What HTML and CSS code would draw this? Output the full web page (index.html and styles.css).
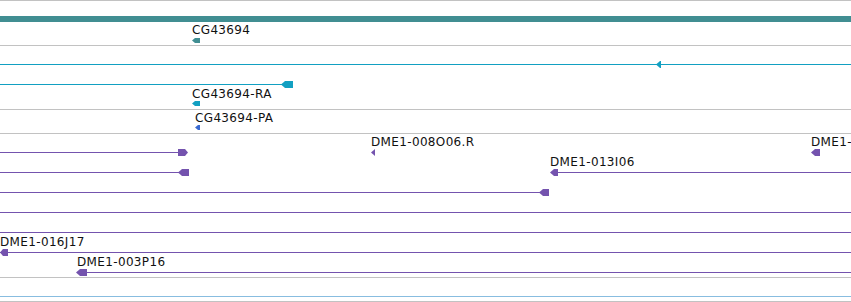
FILE: index.html
```html
<!DOCTYPE html>
<html lang="en">
<head>
    <meta charset="UTF-8">
    <meta name="viewport" content="width=device-width, initial-scale=1.0">
    <title>Tracks</title>
    <link rel="stylesheet" href="styles.css">
</head>
<body>
    <div class="tracks">
        <svg class="canvas" width="851" height="302" viewBox="0 0 851 302">
            <!-- track separators -->
            <rect class="sep" x="0" y="0" width="851" height="1"/>
            <rect class="sep" x="0" y="45" width="851" height="1"/>
            <rect class="sep" x="0" y="109" width="851" height="1"/>
            <rect class="sep" x="0" y="133" width="851" height="1"/>
            <rect class="sep" x="0" y="277" width="851" height="1"/>
            <rect class="sep-blue" x="0" y="296" width="851" height="1"/>
            <rect class="sep" x="0" y="301" width="851" height="1"/>

            <!-- gene track -->
            <rect class="teal" x="0" y="16" width="851" height="6"/>
            <text class="label" x="192" y="34">CG43694</text>
            <polygon class="teal" points="192,40.5 195,38 200,38 200,43 195,43"/>

            <!-- transcripts -->
            <rect class="cyan" x="0" y="64" width="851" height="1"/>
            <polygon class="cyan" points="656,64.5 660,61 661,61 661,68 660,68"/>
            <rect class="cyan" x="0" y="84" width="285" height="1"/>
            <polygon class="cyan" points="281,84.5 285,81 293,81 293,88 285,88"/>
            <text class="label" x="192" y="98">CG43694-RA</text>
            <polygon class="cyan" points="192,103.5 195,101 200,101 200,106 195,106"/>

            <text class="label" x="195" y="122">CG43694-PA</text>
            <polygon class="blue" points="195,127.5 198,125 200,125 200,130 198,130"/>

            <!-- clones -->
            <rect class="purple" x="0" y="152" width="180" height="1"/>
            <polygon class="purple" points="178,149 185,149 188,152.5 185,156 178,156"/>
            <text class="label" x="371" y="146">DME1-008O06.R</text>
            <polygon class="purple" points="371,152.5 375,149 375,156"/>
            <text class="label" x="811" y="146">DME1-016A01</text>
            <polygon class="purple" points="811,152.5 815,149 820,149 820,156 815,156"/>

            <rect class="purple" x="0" y="172" width="182" height="1"/>
            <polygon class="purple" points="178,172.5 182,169 189,169 189,176 182,176"/>
            <text class="label" x="550" y="166">DME1-013I06</text>
            <rect class="purple" x="555" y="172" width="296" height="1"/>
            <polygon class="purple" points="550,172.5 554,169 558,169 558,176 554,176"/>

            <rect class="purple" x="0" y="192" width="543" height="1"/>
            <polygon class="purple" points="539,192.5 543,189 549,189 549,196 543,196"/>

            <rect class="purple" x="0" y="212" width="851" height="1"/>
            <rect class="purple" x="0" y="232" width="851" height="1"/>

            <text class="label" x="0" y="246">DME1-016J17</text>
            <rect class="purple" x="0" y="252" width="851" height="1"/>
            <polygon class="purple" points="0,252.5 3,249 8,249 8,256 3,256"/>

            <text class="label" x="77" y="266">DME1-003P16</text>
            <rect class="purple" x="80" y="272" width="771" height="1"/>
            <polygon class="purple" points="76,272.5 80,269 87,269 87,276 80,276"/>
        </svg>
    </div>
</body>
</html>
```

FILE: styles.css
```css
body {
    margin: 0;
    background-color: #fff;
    overflow: hidden;
}
.tracks {
    width: 851px;
    height: 302px;
}
.canvas {
    display: block;
}
.sep {
    fill: #c2c2c2;
}
.sep-blue {
    fill: #88bde0;
}
.teal {
    fill: #418e92;
}
.cyan {
    fill: #12a0c2;
}
.blue {
    fill: #3a6ad0;
}
.purple {
    fill: #7453ae;
}
.label {
    font-family: "DejaVu Sans", sans-serif;
    font-size: 12px;
    letter-spacing: 0.35px;
    fill: #111;
}
```
